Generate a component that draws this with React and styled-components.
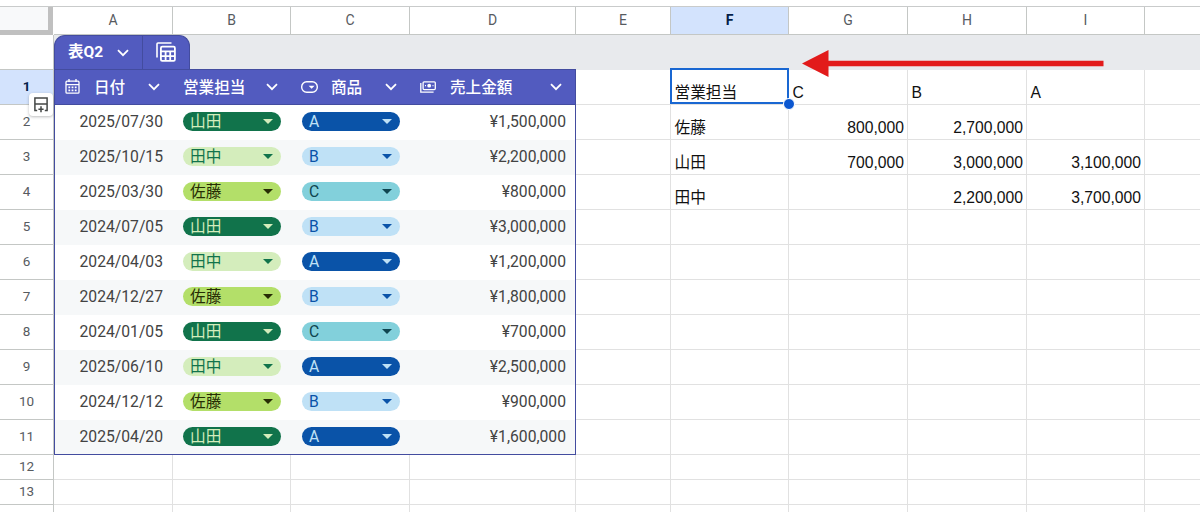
import React from 'react';
import styled, {createGlobalStyle, css} from 'styled-components';

const GlobalStyle = createGlobalStyle`
    *{
        box-sizing:border-box;
    }
    body{
        margin:0;
        background:#fff;
        overflow:hidden;
    }
`;

const COLUMNS = '54px 119px 118px 119px 166px 95px 118px 119px 119px 118px 119px';

const Sheet = styled.div`
    position:relative;
    width:1200px;
    height:512px;
    padding-top:6px;
    overflow:hidden;
    background:#fff;
    font-family:'Liberation Sans','Noto Sans CJK JP',sans-serif;
    font-size:15.7px;
    color:#111;
`;

const HeaderRow = styled.div`
    display:grid;
    grid-template-columns:${COLUMNS};
    height:29px;
    border-top:1px solid #c9cbcb;
`;

const ColumnHeader = styled.div`
    display:flex;
    align-items:center;
    justify-content:center;
    border-right:1px solid #c4c7c5;
    border-bottom:1px solid #c4c7c5;
    font-family:Roboto,sans-serif;
    font-size:14px;
    line-height:16px;
    padding-bottom:1px;
    color:#575b5f;
    ${({$active}) => $active && css`
        background:#d3e3fd;
        color:#041e49;
        font-weight:700;
    `}
`;

const Corner = styled.div`
    background:#f8f9fa;
    border-right:5px solid #c0c0c0;
    border-bottom:5px solid #c0c0c0;
    margin-right:1px;
`;

const Row = styled.div`
    display:grid;
    grid-template-columns:${COLUMNS};
    height:${({$short}) => $short ? 25 : 35}px;
`;

const RowHeader = styled.div`
    display:flex;
    align-items:center;
    justify-content:center;
    padding-bottom:2px;
    border-right:1px solid #c4c7c5;
    border-bottom:1px solid #c4c7c5;
    font-family:Roboto,sans-serif;
    font-size:13.5px;
    line-height:16px;
    color:#575b5f;
    ${({$active}) => $active && css`
        background:#d3e3fd;
        color:#041e49;
        font-weight:700;
    `}
`;

const Band = styled.div`
    grid-column:2 / -1;
    display:flex;
    background:#e8eaed;
`;

const TableTab = styled.div`
    display:flex;
    width:136px;
    height:34px;
    background:#525bbf;
    border:1px solid #434c9f;
    border-bottom:0;
    border-radius:11px 11px 0 0;
    color:#fff;
`;

const TabName = styled.div`
    display:flex;
    align-items:center;
    justify-content:space-between;
    width:88px;
    padding:0 13px 5px 13px;
    border-right:1px solid #434c9f;
    font-family:Roboto,'Noto Sans CJK JP',sans-serif;
    font-size:15.5px;
    font-weight:700;
    > svg{
        margin-top:5px;
    }
`;

const TabIcon = styled.div`
    display:flex;
    flex:1;
    align-items:center;
    justify-content:center;
    padding-bottom:1px;
`;

const Cell = styled.div`
    display:flex;
    align-items:flex-end;
    justify-content:${({$number}) => $number ? 'flex-end' : 'flex-start'};
    padding:0 3px 1px 3.5px;
    border-right:1px solid #e1e1e1;
    border-bottom:1px solid #e1e1e1;
    line-height:20px;
    white-space:nowrap;
`;

const TableHeader = styled.div`
    grid-column:2 / 6;
    display:grid;
    grid-template-columns:118px 118px 119px 1fr;
    margin-top:-1px;
    background:#525bbf;
    border:1px solid #434c9f;
    color:#fff;
`;

const FieldName = styled.div`
    display:flex;
    align-items:center;
    gap:${({$gap}) => $gap || 14}px;
    padding:0 13.5px 3px 10px;
    font-family:Roboto,'Noto Sans CJK JP',sans-serif;
    font-size:15.6px;
    font-weight:500;
    > svg{
        margin-top:2px;
    }
    > svg:last-child{
        margin:3px 0 0 auto;
    }
`;

const TableRow = styled.div`
    grid-column:2 / 6;
    display:grid;
    grid-template-columns:117px 119px 119px 1fr;
    background:${({$striped}) => $striped ? '#f6f8f9' : '#fff'};
    border-left:1px solid #434c9f;
    border-right:1px solid #434c9f;
    border-bottom:${({$last}) => $last ? '1px solid #434c9f' : '0'};
    font-family:Roboto,'Noto Sans CJK JP',sans-serif;
    color:#434343;
`;

const TableCell = styled.div`
    display:flex;
    align-items:center;
    justify-content:flex-end;
    padding:0 9px ${({$last}) => $last ? 2 : 3}px 10px;
`;

const Pill = styled.div`
    display:flex;
    align-items:center;
    justify-content:space-between;
    width:98px;
    height:19px;
    margin-right:1px;
    padding:0 8px 0 7px;
    flex-shrink:0;
    border-radius:10px;
    background:${({$bg}) => $bg};
    color:${({$fg}) => $fg};
    line-height:19px;
`;

const PillArrow = styled.span`
    border:5.5px solid transparent;
    border-top-color:currentColor;
    border-bottom:0;
`;

const Selection = styled.div`
    position:absolute;
    left:670px;
    top:68px;
    width:119px;
    height:36px;
    border:2px solid #1967d2;
`;

const FillHandle = styled.div`
    position:absolute;
    right:-8px;
    bottom:-8px;
    width:12px;
    height:12px;
    border:1px solid #fff;
    border-radius:50%;
    background:#0b57d0;
`;

const InsertButton = styled.div`
    position:absolute;
    left:29px;
    top:93px;
    display:flex;
    align-items:center;
    justify-content:center;
    width:24px;
    height:23px;
    border-radius:4px;
    background:#fff;
    box-shadow:0 1px 3px rgba(60,64,67,.35);
`;

const Arrow = styled.svg`
    position:absolute;
    left:802px;
    top:50px;
`;

const PILLS = {
    '山田':{bg:'#11734b', fg:'#d4edbc'},
    '田中':{bg:'#d4edbc', fg:'#11734b'},
    '佐藤':{bg:'#b3df69', fg:'#272d05'},
    A:{bg:'#0a53a8', fg:'#bfe1f6'},
    B:{bg:'#bfe1f6', fg:'#0a53a8'},
    C:{bg:'#82d0db', fg:'#0f4550'},
};

const letters = ['A','B','C','D','E','F','G','H','I',''];

const sales = [
    {date:'2025/07/30', person:'山田', item:'A', amount:'¥1,500,000'},
    {date:'2025/10/15', person:'田中', item:'B', amount:'¥2,200,000'},
    {date:'2025/03/30', person:'佐藤', item:'C', amount:'¥800,000'},
    {date:'2024/07/05', person:'山田', item:'B', amount:'¥3,000,000'},
    {date:'2024/04/03', person:'田中', item:'A', amount:'¥1,200,000'},
    {date:'2024/12/27', person:'佐藤', item:'B', amount:'¥1,800,000'},
    {date:'2024/01/05', person:'山田', item:'C', amount:'¥700,000'},
    {date:'2025/06/10', person:'田中', item:'A', amount:'¥2,500,000'},
    {date:'2024/12/12', person:'佐藤', item:'B', amount:'¥900,000'},
    {date:'2025/04/20', person:'山田', item:'A', amount:'¥1,600,000'},
];

// columns E to J
const pivot = [
    ['','営業担当','C','B','A',''],
    ['','佐藤','800,000','2,700,000','',''],
    ['','山田','700,000','3,000,000','3,100,000',''],
    ['','田中','','2,200,000','3,700,000',''],
];
const emptyCells = ['','','','','',''];

const Chevron = () => (
    <svg width="12" height="8" viewBox="0 0 12 8" fill="none" stroke="#fff" strokeWidth="1.8">
        <path d="M1 1.2l5 5 5-5"/>
    </svg>
);

const CalendarIcon = () => (
    <svg width="15" height="15" viewBox="0 0 15 15" fill="none" stroke="#fff" strokeWidth="1.3">
        <rect x="1" y="2.2" width="13" height="12" rx="1"/>
        <path d="M1 5.6h13M4 0v3M11 0v3"/>
        <path d="M3.4 8.3h8.2M3.4 11.4h8.2" strokeWidth="1.7" strokeDasharray="1.8 1.4"/>
    </svg>
);

const DropdownIcon = () => (
    <svg width="17" height="12" viewBox="0 0 17 12" fill="none" stroke="#fff" strokeWidth="1.4">
        <rect x=".7" y=".8" width="15.6" height="10.4" rx="5"/>
        <path d="M7.6 4.8h6l-3 3z" fill="#fff" stroke="none"/>
    </svg>
);

const MoneyIcon = () => (
    <svg width="16" height="12" viewBox="0 0 16 12" fill="none" stroke="#fff" strokeWidth="1.3">
        <rect x="3.1" y=".8" width="12.2" height="7.8" rx="1"/>
        <path d="M.8 2v9.2h12.8"/>
        <circle cx="9.2" cy="4.7" r="1.9" fill="#fff" stroke="none"/>
        <path d="M5 4.7h1M12.5 4.7h1"/>
    </svg>
);

const PivotIcon = () => (
    <svg width="20" height="20" viewBox="0 0 20 20" fill="none" stroke="#fff" strokeWidth="1.8">
        <path d="M1 15.5V2Q1 1 2 1h13.5" strokeWidth="1.6"/>
        <rect x="4.9" y="4.6" width="14" height="14.2" rx="1.3"/>
        <path d="M4.9 9.4h14M4.9 14.1h14M9.6 9.4v9.4M14.2 9.4v9.4"/>
    </svg>
);

const InsertIcon = () => (
    <svg width="14" height="17" viewBox="0 0 14 17" fill="none" stroke="#444746" strokeWidth="1.5">
        <path d="M3.2 14.4H.9V2h12.2v12.4h-2.3M1 8.1h12M7 10.3v6M4.4 13.3h5.2"/>
    </svg>
);

function SalesRow({sale, index}) {
    const last = index === sales.length-1;
    return (
        <TableRow $striped={index % 2 === 1} $last={last}>
            <TableCell $last={last}>{sale.date}</TableCell>
            {[sale.person, sale.item].map((name)=>(
                <TableCell key={name} $last={last}>
                    <Pill $bg={PILLS[name].bg} $fg={PILLS[name].fg}>
                        {name}
                        <PillArrow/>
                    </Pill>
                </TableCell>
            ))}
            <TableCell $last={last}>{sale.amount}</TableCell>
        </TableRow>
    )
}

function PivotCells({cells}) {
    return cells.map((value, index)=>(
        <Cell key={index} $number={/^\d/.test(value)}>{value}</Cell>
    ))
}

function App() {
    return (
        <>
            <GlobalStyle/>
            <Sheet>
                <HeaderRow>
                    <Corner/>
                    {letters.map((letter)=>(
                        <ColumnHeader key={letter} $active={letter === 'F'}>{letter}</ColumnHeader>
                    ))}
                </HeaderRow>
                <Row>
                    <RowHeader/>
                    <Band>
                        <TableTab>
                            <TabName>表Q2<Chevron/></TabName>
                            <TabIcon><PivotIcon/></TabIcon>
                        </TableTab>
                    </Band>
                </Row>
                <Row>
                    <RowHeader $active>1</RowHeader>
                    <TableHeader>
                        <FieldName><CalendarIcon/>日付<Chevron/></FieldName>
                        <FieldName>営業担当<Chevron/></FieldName>
                        <FieldName $gap={13}><DropdownIcon/>商品<Chevron/></FieldName>
                        <FieldName $gap={14}><MoneyIcon/>売上金額<Chevron/></FieldName>
                    </TableHeader>
                    <PivotCells cells={pivot[0]}/>
                </Row>
                {sales.map((sale, index)=>(
                    <Row key={index}>
                        <RowHeader>{index+2}</RowHeader>
                        <SalesRow sale={sale} index={index}/>
                        <PivotCells cells={pivot[index+1] || emptyCells}/>
                    </Row>
                ))}
                {[12,13,14].map((number)=>(
                    <Row key={number} $short>
                        <RowHeader>{number}</RowHeader>
                        <PivotCells cells={['','','','',...emptyCells]}/>
                    </Row>
                ))}
                <Selection><FillHandle/></Selection>
                <InsertButton><InsertIcon/></InsertButton>
                <Arrow width="302" height="28" viewBox="0 0 302 28">
                    <path d="M0 13.5L26.5 0v10.8h275v5.4h-275v10.8z" fill="#e21b1b"/>
                </Arrow>
            </Sheet>
        </>
    )
}

export default App
